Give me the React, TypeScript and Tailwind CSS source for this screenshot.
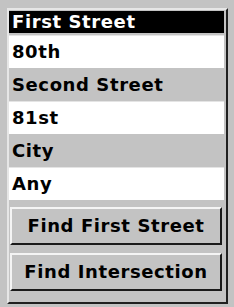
import React from "react";

const font = { fontFamily: '"DejaVu Sans", "Liberation Sans", sans-serif' };

function Label({ text, dark }: { text: string; dark?: boolean }) {
  return (
    <div
      className={
        dark
          ? "h-[22px] bg-black text-white flex items-center pl-[3px] text-[18px] font-bold leading-none tracking-[0.6px]"
          : "h-[33px] bg-[#c3c3c3] text-black flex items-center pl-[3px] text-[18px] font-bold leading-none tracking-[0.6px]"
      }
    >
      {text}
    </div>
  );
}

function Field({ text }: { text: string }) {
  return (
    <div className="h-[33px] bg-white border-t border-[#e4e4e4] flex items-center pl-[3px] text-[18px] font-bold leading-none tracking-[0.6px] text-black">
      {text}
    </div>
  );
}

function Btn({ text }: { text: string }) {
  return (
    <div className="h-[38px] w-[212px] ml-[1px] border-t-2 border-l-2 border-[#f4f4f4] border-r-2 border-b-2 border-r-[#1a1a1a] border-b-[#1a1a1a] bg-[#c3c3c3] flex items-center justify-center text-[18px] font-bold leading-none tracking-[0.6px] text-black">
      {text}
    </div>
  );
}

export default function App() {
  return (
    <div className="w-[234px] h-[307px] bg-[#c3c3c3] relative overflow-hidden" style={font}>
      <div className="absolute left-[7px] top-[8px] w-[221px] h-[296px] border-l-2 border-t-2 border-[#e6e6e6] border-r-2 border-b-2 border-r-[#202020] border-b-[#202020]" />
      <div className="relative flex flex-col pt-[11px] pl-[9px] w-[224px]">
        <Label text="First Street" dark />
        <div className="h-[2px]" />
        <Field text="80th" />
        <Label text="Second Street" />
        <Field text="81st" />
        <Label text="City" />
        <Field text="Any" />
        <div className="h-[7px]" />
        <Btn text="Find First Street" />
        <div className="h-[8px]" />
        <Btn text="Find Intersection" />
      </div>
    </div>
  );
}
